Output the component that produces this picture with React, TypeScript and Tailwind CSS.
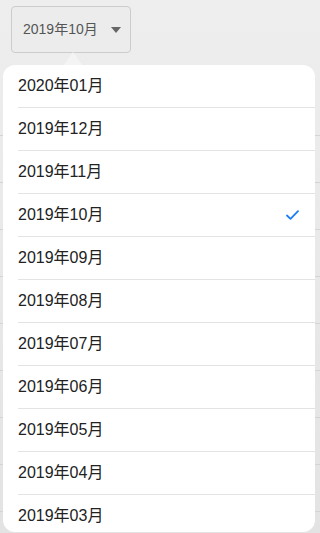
import React from 'react';

const months = [
  '2020年01月',
  '2019年12月',
  '2019年11月',
  '2019年10月',
  '2019年09月',
  '2019年08月',
  '2019年07月',
  '2019年06月',
  '2019年05月',
  '2019年04月',
  '2019年03月',
];

const selected = '2019年10月';

const App: React.FC = () => {
  return (
    <div
      className="relative w-[320px] h-[533px] overflow-hidden bg-gradient-to-b from-[#eeeeee] to-[#e3e3e3]"
      style={{ fontFamily: '"Liberation Sans", "Noto Sans CJK SC", sans-serif' }}
    >
      {/* page behind the popover */}
      <div className="h-[89px] pt-[6px] pl-[11px]">
        <button className="flex items-center w-[120px] h-[47px] pl-[11px] pr-[8px] border border-[#cccccc] rounded-[4px] bg-[#ececec] text-[14px] text-[#555555]">
          <span>2019年10月</span>
          <span className="ml-auto mr-[1px] w-0 h-0 border-l-[5px] border-r-[5px] border-t-[6px] border-l-transparent border-r-transparent border-t-[#666666]"></span>
        </button>
      </div>
      <div>
        {Array.from({ length: 10 }).map((_, i) => (
          <div key={i} className="h-[47px] border-b border-[#d4d4d4]"></div>
        ))}
      </div>

      {/* popover */}
      <div className="absolute left-[64px] top-[52px] w-0 h-0 border-l-[9px] border-r-[9px] border-b-[13px] border-l-transparent border-r-transparent border-b-[#f4f4f4]"></div>
      <div className="absolute left-[3px] top-[65px] w-[312px] h-[467px] bg-white rounded-[12px] overflow-hidden">
        {months.map((m) => (
          <div key={m} className="pl-[15px]">
            <div className="flex items-center h-[43px] border-b border-[#e3e3e3] text-[16px] text-[#222222]">
              <span>{m}</span>
              {m === selected && (
                <svg
                  className="ml-auto mr-[16px]"
                  width="13"
                  height="10"
                  viewBox="0 0 13 10"
                  fill="none"
                >
                  <polyline
                    points="1,5.5 4.5,8.8 12,1.2"
                    stroke="#1a7df5"
                    strokeWidth="1.8"
                    strokeLinecap="round"
                    strokeLinejoin="round"
                  />
                </svg>
              )}
            </div>
          </div>
        ))}
      </div>
    </div>
  );
};

export default App;
